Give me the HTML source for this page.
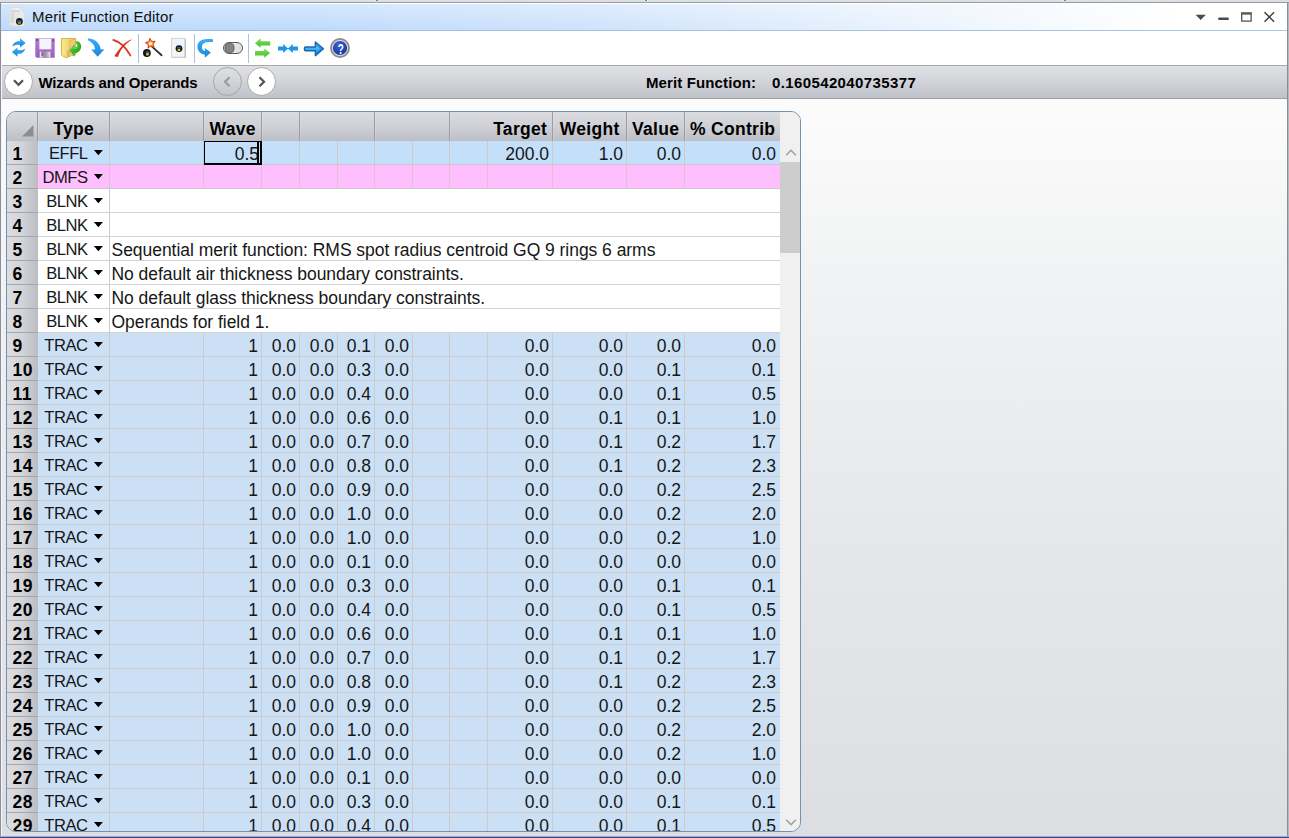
<!DOCTYPE html>
<html><head><meta charset="utf-8"><title>Merit Function Editor</title>
<style>
html,body{margin:0;padding:0}
body{width:1289px;height:838px;overflow:hidden;position:relative;background:#dcdfe3;font-family:"Liberation Sans",sans-serif;color:#000}
div,b,i,span{box-sizing:border-box}
.abs{position:absolute}
#topline{left:0;top:2px;width:1289px;height:1px;background:#979ba2}
#leftedge{left:0;top:3px;width:1px;height:835px;background:#8a8e96}
#leftwhite{left:1px;top:31px;width:1px;height:805px;background:#f4f5f7}
#rightedge{left:1287px;top:3px;width:2px;height:835px;background:linear-gradient(to right,#8a8e96 50%,#b4b7bd 50%)}
#win{left:1px;top:3px;width:1286px;height:833px;overflow:hidden}
#titlew{left:0;top:0;width:1286px;height:1px;background:#fff}
#title{left:0;top:1px;width:1286px;height:26px;background:linear-gradient(to right,#bedafc 0px,#bfdbfc 300px,#cfe3fc 600px,#e2eefd 820px,#f3f8fe 1020px,#ffffff 1180px)}
#title:after{content:"";position:absolute;left:0;top:0;width:100%;height:100%;background:linear-gradient(to bottom,rgba(255,255,255,.36),rgba(255,255,255,0) 95%)}
#titleline{left:0;top:27px;width:1286px;height:1px;background:linear-gradient(to right,#9fbbd9,#a9c3e3 1100px)}
#ttext{left:31px;top:4.5px;font-size:15px;line-height:18px;white-space:nowrap;color:#111;letter-spacing:.15px}
#toolbar{left:0;top:28px;width:1286px;height:34px;background:#fff}
.sep{position:absolute;top:3px;width:1px;height:29px;background:#9db7dd}
.ic{position:absolute;top:6px;width:22px;height:22px}
#hbar{left:0;top:62px;width:1286px;height:34px;background:linear-gradient(to bottom,#dfe1e5 0%,#d3d5da 45%,#bfc2c9 100%);border-top:1px solid #a6a8ad;border-bottom:1px solid #9b9ea5}
.circ{position:absolute;top:1px;width:29px;height:29px;border-radius:50%;border:1px solid #a9a9a9;background:#fff}
.circ svg{position:absolute;left:0;top:0}
#wtext{left:37.5px;top:8px;font-weight:bold;font-size:15px;line-height:18px;white-space:nowrap;letter-spacing:-.18px}
#mf1{left:645px;top:8px;font-weight:bold;font-size:15px;line-height:18px;white-space:nowrap;letter-spacing:.12px}
#mf2{left:771px;top:8px;font-weight:bold;font-size:15px;line-height:18px;white-space:nowrap;letter-spacing:.38px}
#content{left:0;top:96px;width:1286px;height:737px;background:linear-gradient(to bottom,#fcfcfc 0%,#f1f2f3 25%,#e6e7ea 60%,#dcdee2 100%)}
#botgray{left:0;top:836px;width:1289px;height:1px;background:#a9abb0}
#botblue{left:0;top:837px;width:1289px;height:1px;background:#2b4a9c}
/* grid frame */
#frame{left:6px;top:111px;width:795px;height:721px;border:1px solid #7391b4;border-radius:10px;overflow:hidden;background:#f0f0f0}
#grid{position:absolute;left:0;top:0;width:793px;height:719px}
#hdr{position:absolute;left:0;top:0;width:773px;height:29px;background:linear-gradient(to bottom,#dadce0 0%,#cfd1d6 50%,#bcbec5 100%)}
#hdrline{display:none}
.hv{position:absolute;top:0;width:1px;height:29px;background:#9c9ea4;box-shadow:1px 0 0 rgba(255,255,255,.12)}
.hc{position:absolute;top:0;height:28px;line-height:34px;text-align:center;font-weight:bold;font-size:17.5px;white-space:nowrap;letter-spacing:.3px;text-indent:.3px}
.r{position:absolute;left:0;width:773px;height:24px;border-bottom:1px solid #cbcbcb;color:#161616;font-size:17.5px;line-height:26px;white-space:nowrap}
.r.sel{background:#c4dff9}
.r.pink{background:#ffbfff}
.r.blank{background:#fff;border-bottom-color:#d3d3d3}
.r.trac{background:#cbe0f4}
.rn{position:absolute;left:0;top:0;width:31px;height:24px;color:#000;background:linear-gradient(to right,#dddee1 0%,#d2d3d7 50%,#bcbdc3 100%);font-weight:bold;padding-left:5.5px;letter-spacing:.5px;border-bottom:1px solid #a4a6ab}
.ty{position:absolute;left:31px;top:0;width:71px;height:23px}
.ty span{position:absolute;right:21.5px;top:0;letter-spacing:-.5px;font-size:16.6px}
.ty i{position:absolute;left:55.9px;top:9px;width:9px;height:5.3px;background:#000;clip-path:polygon(0 0,100% 0,50% 100%)}
.r:after{content:"";position:absolute;left:102px;top:0;width:1px;height:23px;background:#cbcbcb}
.vl{position:absolute;top:0;width:1px;height:23px;background:#cbcbcb}
.pink .vl,.pink:after{background:#d9c2d9}
.c{position:absolute;top:0;height:23px;text-align:right;padding-right:3px}
.c.ed{z-index:2;border:solid #000;border-width:1px 2px 2px 1px;height:24px;padding-right:1px;line-height:24px}
.c.ed:after{content:"";position:absolute;right:1px;top:0;width:2px;height:21px;background:#000}
.cm{position:absolute;left:103px;top:0;padding-left:1.5px;letter-spacing:-.04px}
/* scrollbar */
#sb{position:absolute;left:773px;top:0;width:20px;height:719px;background:#f0f0f0}
#thumb{position:absolute;left:0;top:50px;width:20px;height:91px;background:#cdcdcd}
</style></head><body>
<div class="abs" id="topline"></div>
<b class="abs" style="left:375px;top:0;width:4px;height:1px;background:#f4f4f4"></b><b class="abs" style="left:376px;top:0;width:2px;height:1px;background:#7a7e86"></b>
<b class="abs" style="left:644px;top:0;width:4px;height:1px;background:#f4f4f4"></b><b class="abs" style="left:645px;top:0;width:2px;height:1px;background:#7a7e86"></b>
<b class="abs" style="left:1063px;top:0;width:4px;height:1px;background:#f4f4f4"></b><b class="abs" style="left:1064px;top:0;width:2px;height:1px;background:#7a7e86"></b>
<div class="abs" id="win">
 <div class="abs" id="titlew"></div>
 <div class="abs" id="title"></div>
 <div class="abs" id="titleline"></div>
 <!-- title icon -->
 <svg class="abs" style="left:7px;top:3px" width="18" height="22" viewBox="0 0 18 22">
  <defs><linearGradient id="docg" x1="0" y1="0" x2="1" y2="0"><stop offset="0" stop-color="#e2e2e2"/><stop offset=".5" stop-color="#f1f1f1"/><stop offset="1" stop-color="#e6e6e6"/></linearGradient></defs>
  <path d="M1.5 1.5h10.3l4.7 4.9v13.6h-15z" fill="url(#docg)" stroke="#dcdcdc" stroke-width="1"/>
  <path d="M3.2 3.9h8l.6 .6v12.6h-8.6z" fill="#d6d6d6"/>
  <path d="M5.8 6h6v11h-6z" fill="#e7e7e7"/>
  <circle cx="11.4" cy="15.4" r="3.4" fill="#1a1a1a"/><path d="M9.6 16.1h3.6l-.5 1.9h-2.6z" fill="#8f8c22"/><path d="M9.4 14.6h4.1v1.2h-4.1z" fill="#2a78b8"/>
 </svg>
 <div class="abs" id="ttext">Merit Function Editor</div>
 <!-- window controls -->
 <svg class="abs" style="left:1189px;top:5px" width="92" height="18" viewBox="0 0 92 18">
  <path d="M5.6 6.7h10.2l-5.1 5.4z" fill="#4a4a4a"/>
  <rect x="28.3" y="9.6" width="10.4" height="2.5" rx=".6" fill="#4a4a4a"/>
  <rect x="51.7" y="5.2" width="9.4" height="7.9" fill="none" stroke="#555" stroke-width="1.3"/><rect x="51.1" y="4.4" width="10.6" height="2.2" fill="#555"/>
  <path d="M74.5 4.3l9.6 9.4M84.1 4.3l-9.6 9.4" stroke="#444" stroke-width="1.5" fill="none"/>
 </svg>
 <div class="abs" id="toolbar">
  <svg style="position:absolute;left:0;top:0" width="400" height="34" viewBox="1 31 400 34">
 <defs>
  <linearGradient id="gb" x1="0" y1="0" x2="0" y2="1"><stop offset="0" stop-color="#38b0f8"/><stop offset="1" stop-color="#1886de"/></linearGradient>
  <linearGradient id="gp" x1="0" y1="0" x2="0" y2="1"><stop offset="0" stop-color="#b07ad0"/><stop offset="1" stop-color="#9a5fc0"/></linearGradient>
  <linearGradient id="gy" x1="0" y1="0" x2="1" y2="0"><stop offset="0" stop-color="#f8ea8a"/><stop offset="1" stop-color="#ecc860"/></linearGradient>
  <linearGradient id="gg" x1="0" y1="0" x2="1" y2="1"><stop offset="0" stop-color="#5fd048"/><stop offset="1" stop-color="#1f9a14"/></linearGradient>
  <linearGradient id="gg2" x1="0" y1="0" x2="0" y2="1"><stop offset="0" stop-color="#7fe058"/><stop offset="1" stop-color="#46bf2a"/></linearGradient>
  <linearGradient id="gs" x1="0" y1="0" x2="1" y2="0"><stop offset="0" stop-color="#f4f4f4"/><stop offset=".5" stop-color="#8f8f8f"/><stop offset="1" stop-color="#e8e8e8"/></linearGradient>
  <linearGradient id="ga" x1="0" y1="0" x2="0" y2="1"><stop offset="0" stop-color="#8fd8fb"/><stop offset=".5" stop-color="#3fb2f2"/><stop offset="1" stop-color="#2a8fe0"/></linearGradient>
  <radialGradient id="gh" cx=".4" cy=".3" r=".8"><stop offset="0" stop-color="#3a62d8"/><stop offset="1" stop-color="#12309a"/></radialGradient>
 </defs>
 <!-- 1 refresh -->
 <g fill="url(#gb)">
  <path d="M12.3 46.6C13 42.6 16.6 40.8 20 41.2L20 38.2 25.6 43 20 47.6 20 44.9C17.4 44.5 14.4 45 12.3 46.6Z"/>
  <path d="M25.2 48.4C24.5 52.4 20.9 54.2 17.5 53.8L17.5 56.8 11.9 52 17.5 47.4 17.5 50.1C20.1 50.5 23.1 50 25.2 48.4Z"/>
 </g>
 <!-- 2 floppy -->
 <path d="M35.3 38.3h19.4v19.4h-18l-1.4-1.4z" fill="url(#gp)"/>
 <rect x="39.2" y="38.6" width="12" height="10.6" fill="#f2f6fb" stroke="#c9b3dc" stroke-width=".6"/>
 <rect x="36.2" y="39.2" width="1.6" height="1.6" fill="#5a3a70"/><rect x="52.6" y="39.2" width="1.2" height="2.4" fill="#5a3a70"/>
 <rect x="39.8" y="51.6" width="10.6" height="6" fill="url(#gs)"/>
 <rect x="41.3" y="52" width="2.4" height="4.2" fill="#9a5fc0"/>
 <!-- 3 folder + green arrow -->
 <path d="M61.5 38.5h14.2v16.3l-4 .4-5 2.5-1.6-.3-3.6-2.2z" fill="url(#gy)" stroke="#d9ab42" stroke-width=".9"/>
 <path d="M69.3 40.4l6.2-1.2v15.6l-6.2 1.6z" fill="#f5c877" stroke="#dca94a" stroke-width=".5"/>
 <path d="M66.7 50.5l2.6 0v6l-2.6 1.1z" fill="#c9a25a" opacity=".55"/>
 <path d="M69.2 50.2L74.6 44 74.6 47.4C77 47.4 77.7 46 77.3 44.7 77.1 43.9 76.5 43.6 75.8 43.8L75.5 41.3C78.8 40.5 80.8 42.6 81.1 45.6 81.5 49.8 79 53 74.6 53.2L74.6 56.7Z" fill="url(#gg)"/>
 <path d="M70.6 50.2L74 46.4 74 48.4C76 48.6 77.4 48 78 46.8" fill="none" stroke="#7df060" stroke-width=".9" opacity=".8"/>
 <!-- 4 blue curved arrow -->
 <path d="M88 38.6C91 38.4 95 39.6 97.6 42.4 99.6 44.6 100.5 47 100.7 49.4L104.5 49.3 97.6 56.8 91.3 49.6 95 49.6C95 46.6 93.4 43 88 40.3Z" fill="url(#gb)"/>
 <!-- 5 red X -->
 <path d="M113.4 40C117 41 120.5 43.2 122.8 45.4 125.5 48 128.5 52 130.4 55.4" fill="none" stroke="#e03a2a" stroke-width="1.9" stroke-linecap="round"/>
 <path d="M132.4 39.3C128 40.5 124.5 42.9 121.9 45.9 118.9 49.4 116.3 52.8 114.2 56.2L117.9 57C119.1 53 121 49.6 123.6 46.7 126 44 129 41.5 132.4 39.3Z" fill="#df2e1e"/>
 <!-- 6 wand -->
 <path d="M152 46.6L161.6 55.2" stroke="#333" stroke-width="1.9" stroke-linecap="round"/>
 <path d="M149.8 38.5 L151.6 41.5 L155.0 41.3 L152.8 43.9 L154.0 47.1 L150.8 45.8 L148.2 47.9 L148.4 44.5 L145.6 42.6 L148.9 41.8Z" fill="#fbe23a" stroke="#e2452c" stroke-width="1.2" stroke-linejoin="round"/><circle cx="150.3" cy="43.6" r="1.6" fill="#fff9b0"/>
 <circle cx="146.9" cy="53" r="3.9" fill="#141414"/><rect x="146.2" y="53" width="2.6" height="2.4" fill="#d8c62a"/><rect x="145.6" y="51.4" width="4" height="1.2" fill="#2a6fb5"/>
 <!-- 7 doc -->
 <rect x="172.4" y="39" width="13.6" height="19" fill="#bdbdbd"/><rect x="171.6" y="38.4" width="13.2" height="18.8" fill="#f1f4f9" stroke="#d2d2d2" stroke-width="1"/>
 <circle cx="179" cy="48.6" r="3.4" fill="#141414"/><rect x="177.6" y="48.8" width="2.6" height="2.2" fill="#d8c62a"/><rect x="177" y="47.2" width="4" height="1.1" fill="#2a6fb5"/>
 <!-- 8 undo -->
 <path d="M213 39.2L213 42.1C209 41.8 206 42 204.2 43 202.2 44.2 201.4 46.4 202.2 48.6 202.7 49.9 203.7 50.8 204.8 51.2L204.8 48 210.9 52.5 204.8 57.7 204.8 54.8C200.5 54.2 197.4 50.8 197.4 46.6 197.4 42.4 200.4 39.6 205 39.2 207.6 39 210.4 39 213 39.2Z" fill="url(#gb)"/>
 <!-- 9 toggle -->
 <rect x="223.5" y="42.5" width="19" height="11" rx="5.5" fill="#e2e2e2" stroke="#5a5a5a" stroke-width="1"/>
 <rect x="225" y="43.4" width="9" height="9.2" rx="3.6" fill="#838383" stroke="#5e5e5e" stroke-width=".9"/>
 <!-- 10 green arrows -->
 <path d="M270.2 41.2v4.2h-9.6v2.4l-5.6-4.6 5.6-5v3z" fill="url(#gg2)"/>
 <path d="M255 51v4.4h9.2v2.4l6-4.8-6-4.6v2.6z" fill="url(#gg2)"/>
 <!-- 11 blue inward arrows -->
 <path d="M278 46.6h5.2v-2.6l4.8 4.5-4.8 4.5v-2.6h-5.2z" fill="#2096ea"/>
 <path d="M298 46.6h-5.2v-2.6l-4.8 4.5 4.8 4.5v-2.6h5.2z" fill="#2096ea"/>
 <path d="M287 48.5h2" stroke="#2096ea" stroke-width="1.2"/>
 <!-- 12 blue right arrow -->
 <path d="M305.7 46.9h9.7v-4.9l8 6.7-8 6.9v-4.9h-9.7a1.2 1.2 0 0 1-1.2-1.2v-1.4a1.2 1.2 0 0 1 1.2-1.2z" fill="url(#ga)" stroke="#1766b6" stroke-width="1.5" stroke-linejoin="round"/>
 <path d="M316.3 44.6l5 4.2-5 4.3" fill="none" stroke="#1d78c8" stroke-width="1.1" opacity=".75"/>
 <!-- 13 help -->
 <circle cx="340" cy="48" r="9" fill="#dfe3ea" stroke="#8e8e8e" stroke-width="2"/>
 <circle cx="340" cy="48" r="7.1" fill="url(#gh)"/>
 <text transform="translate(340.7,53.6) scale(.66,1)" text-anchor="middle" font-family="Liberation Sans, sans-serif" font-weight="bold" font-size="15" fill="#fff">?</text>
 <!-- separators -->
 <rect x="138" y="34" width="1" height="29" fill="#a9c1e2"/>
 <rect x="194" y="34" width="1" height="29" fill="#a9c1e2"/>
 <rect x="248" y="34" width="1" height="29" fill="#a9c1e2"/>
</svg>

 </div>
 <div class="abs" id="hbar">
  <div class="circ" style="left:2.5px"><svg width="27" height="27" viewBox="0 0 27 27"><path d="M9 12.3l4.5 4.5L18 12.3" fill="none" stroke="#555" stroke-width="2.3"/></svg></div>
  <div class="abs" id="wtext">Wizards and Operands</div>
  <div class="circ" style="left:212px;background:transparent;border-color:#a4a6aa"><svg width="27" height="27" viewBox="0 0 27 27"><path d="M15.5 9.3l-4.5 4.5 4.5 4.5" fill="none" stroke="#9c9c9c" stroke-width="2.3"/></svg></div>
  <div class="circ" style="left:246px"><svg width="27" height="27" viewBox="0 0 27 27"><path d="M11.5 9.3l4.5 4.5-4.5 4.5" fill="none" stroke="#555" stroke-width="2.3"/></svg></div>
  <div class="abs" id="mf1">Merit Function:</div>
  <div class="abs" id="mf2">0.160542040735377</div>
 </div>
 <div class="abs" id="content"></div>
</div>
<div class="abs" id="leftedge"></div><div class="abs" id="leftwhite"></div><div class="abs" id="rightedge"></div>
<div class="abs" id="botgray"></div><div class="abs" id="botblue"></div>
<div class="abs" id="frame"><div id="grid">
 <div id="hdr">
  <svg style="position:absolute;left:14px;top:12px" width="14" height="14" viewBox="0 0 14 14"><path d="M12.5 1v11.5H1z" fill="#8e8e8e"/></svg>
  <div class="hc" style="left:31px;width:71px">Type</div><div class="hc" style="left:197px;width:57px">Wave</div><div class="hc" style="left:481px;width:64px">Target</div><div class="hc" style="left:546px;width:73px">Weight</div><div class="hc" style="left:620px;width:57px">Value</div><div class="hc" style="left:678px;width:95px">% Contrib</div><b class="hv" style="left:30px"></b><b class="hv" style="left:102px"></b><b class="hv" style="left:196px"></b><b class="hv" style="left:254px"></b><b class="hv" style="left:292px"></b><b class="hv" style="left:367px"></b><b class="hv" style="left:442px"></b><b class="hv" style="left:545px"></b><b class="hv" style="left:619px"></b><b class="hv" style="left:677px"></b>
 </div>
 <div id="hdrline"></div>
 <div class="r sel" style="top:29px">
<div class="rn">1</div>
<div class="ty"><span>EFFL</span><i></i></div>
<div class="c" style="left:103px;width:93px"></div>
<div class="c ed" style="left:197px;width:58px">0.5</div>
<div class="c" style="left:255px;width:37px"></div>
<div class="c" style="left:293px;width:37px"></div>
<div class="c" style="left:331px;width:36px"></div>
<div class="c" style="left:368px;width:37px"></div>
<div class="c" style="left:406px;width:36px"></div>
<div class="c" style="left:443px;width:37px"></div>
<div class="c" style="left:481px;width:64px">200.0</div>
<div class="c" style="left:546px;width:73px">1.0</div>
<div class="c" style="left:620px;width:57px">0.0</div>
<div class="c" style="left:678px;width:94px">0.0</div>
<b class="vl" style="left:196px"></b>
<b class="vl" style="left:254px"></b>
<b class="vl" style="left:292px"></b>
<b class="vl" style="left:330px"></b>
<b class="vl" style="left:367px"></b>
<b class="vl" style="left:405px"></b>
<b class="vl" style="left:442px"></b>
<b class="vl" style="left:480px"></b>
<b class="vl" style="left:545px"></b>
<b class="vl" style="left:619px"></b>
<b class="vl" style="left:677px"></b>
</div>
<div class="r pink" style="top:53px">
<div class="rn">2</div>
<div class="ty"><span>DMFS</span><i></i></div>
<div class="c" style="left:103px;width:93px"></div>
<div class="c" style="left:197px;width:57px"></div>
<div class="c" style="left:255px;width:37px"></div>
<div class="c" style="left:293px;width:37px"></div>
<div class="c" style="left:331px;width:36px"></div>
<div class="c" style="left:368px;width:37px"></div>
<div class="c" style="left:406px;width:36px"></div>
<div class="c" style="left:443px;width:37px"></div>
<div class="c" style="left:481px;width:64px"></div>
<div class="c" style="left:546px;width:73px"></div>
<div class="c" style="left:620px;width:57px"></div>
<div class="c" style="left:678px;width:94px"></div>
<b class="vl" style="left:196px"></b>
<b class="vl" style="left:254px"></b>
<b class="vl" style="left:292px"></b>
<b class="vl" style="left:330px"></b>
<b class="vl" style="left:367px"></b>
<b class="vl" style="left:405px"></b>
<b class="vl" style="left:442px"></b>
<b class="vl" style="left:480px"></b>
<b class="vl" style="left:545px"></b>
<b class="vl" style="left:619px"></b>
<b class="vl" style="left:677px"></b>
</div>
<div class="r blank" style="top:77px">
<div class="rn">3</div>
<div class="ty"><span>BLNK</span><i></i></div>
<div class="cm"></div>
</div>
<div class="r blank" style="top:101px">
<div class="rn">4</div>
<div class="ty"><span>BLNK</span><i></i></div>
<div class="cm"></div>
</div>
<div class="r blank" style="top:125px">
<div class="rn">5</div>
<div class="ty"><span>BLNK</span><i></i></div>
<div class="cm">Sequential merit function: RMS spot radius centroid GQ 9 rings 6 arms</div>
</div>
<div class="r blank" style="top:149px">
<div class="rn">6</div>
<div class="ty"><span>BLNK</span><i></i></div>
<div class="cm">No default air thickness boundary constraints.</div>
</div>
<div class="r blank" style="top:173px">
<div class="rn">7</div>
<div class="ty"><span>BLNK</span><i></i></div>
<div class="cm">No default glass thickness boundary constraints.</div>
</div>
<div class="r blank" style="top:197px">
<div class="rn">8</div>
<div class="ty"><span>BLNK</span><i></i></div>
<div class="cm">Operands for field 1.</div>
</div>
<div class="r trac" style="top:221px">
<div class="rn">9</div>
<div class="ty"><span>TRAC</span><i></i></div>
<div class="c" style="left:103px;width:93px"></div>
<div class="c" style="left:197px;width:57px">1</div>
<div class="c" style="left:255px;width:37px">0.0</div>
<div class="c" style="left:293px;width:37px">0.0</div>
<div class="c" style="left:331px;width:36px">0.1</div>
<div class="c" style="left:368px;width:37px">0.0</div>
<div class="c" style="left:406px;width:36px"></div>
<div class="c" style="left:443px;width:37px"></div>
<div class="c" style="left:481px;width:64px">0.0</div>
<div class="c" style="left:546px;width:73px">0.0</div>
<div class="c" style="left:620px;width:57px">0.0</div>
<div class="c" style="left:678px;width:94px">0.0</div>
<b class="vl" style="left:196px"></b>
<b class="vl" style="left:254px"></b>
<b class="vl" style="left:292px"></b>
<b class="vl" style="left:330px"></b>
<b class="vl" style="left:367px"></b>
<b class="vl" style="left:405px"></b>
<b class="vl" style="left:442px"></b>
<b class="vl" style="left:480px"></b>
<b class="vl" style="left:545px"></b>
<b class="vl" style="left:619px"></b>
<b class="vl" style="left:677px"></b>
</div>
<div class="r trac" style="top:245px">
<div class="rn">10</div>
<div class="ty"><span>TRAC</span><i></i></div>
<div class="c" style="left:103px;width:93px"></div>
<div class="c" style="left:197px;width:57px">1</div>
<div class="c" style="left:255px;width:37px">0.0</div>
<div class="c" style="left:293px;width:37px">0.0</div>
<div class="c" style="left:331px;width:36px">0.3</div>
<div class="c" style="left:368px;width:37px">0.0</div>
<div class="c" style="left:406px;width:36px"></div>
<div class="c" style="left:443px;width:37px"></div>
<div class="c" style="left:481px;width:64px">0.0</div>
<div class="c" style="left:546px;width:73px">0.0</div>
<div class="c" style="left:620px;width:57px">0.1</div>
<div class="c" style="left:678px;width:94px">0.1</div>
<b class="vl" style="left:196px"></b>
<b class="vl" style="left:254px"></b>
<b class="vl" style="left:292px"></b>
<b class="vl" style="left:330px"></b>
<b class="vl" style="left:367px"></b>
<b class="vl" style="left:405px"></b>
<b class="vl" style="left:442px"></b>
<b class="vl" style="left:480px"></b>
<b class="vl" style="left:545px"></b>
<b class="vl" style="left:619px"></b>
<b class="vl" style="left:677px"></b>
</div>
<div class="r trac" style="top:269px">
<div class="rn">11</div>
<div class="ty"><span>TRAC</span><i></i></div>
<div class="c" style="left:103px;width:93px"></div>
<div class="c" style="left:197px;width:57px">1</div>
<div class="c" style="left:255px;width:37px">0.0</div>
<div class="c" style="left:293px;width:37px">0.0</div>
<div class="c" style="left:331px;width:36px">0.4</div>
<div class="c" style="left:368px;width:37px">0.0</div>
<div class="c" style="left:406px;width:36px"></div>
<div class="c" style="left:443px;width:37px"></div>
<div class="c" style="left:481px;width:64px">0.0</div>
<div class="c" style="left:546px;width:73px">0.0</div>
<div class="c" style="left:620px;width:57px">0.1</div>
<div class="c" style="left:678px;width:94px">0.5</div>
<b class="vl" style="left:196px"></b>
<b class="vl" style="left:254px"></b>
<b class="vl" style="left:292px"></b>
<b class="vl" style="left:330px"></b>
<b class="vl" style="left:367px"></b>
<b class="vl" style="left:405px"></b>
<b class="vl" style="left:442px"></b>
<b class="vl" style="left:480px"></b>
<b class="vl" style="left:545px"></b>
<b class="vl" style="left:619px"></b>
<b class="vl" style="left:677px"></b>
</div>
<div class="r trac" style="top:293px">
<div class="rn">12</div>
<div class="ty"><span>TRAC</span><i></i></div>
<div class="c" style="left:103px;width:93px"></div>
<div class="c" style="left:197px;width:57px">1</div>
<div class="c" style="left:255px;width:37px">0.0</div>
<div class="c" style="left:293px;width:37px">0.0</div>
<div class="c" style="left:331px;width:36px">0.6</div>
<div class="c" style="left:368px;width:37px">0.0</div>
<div class="c" style="left:406px;width:36px"></div>
<div class="c" style="left:443px;width:37px"></div>
<div class="c" style="left:481px;width:64px">0.0</div>
<div class="c" style="left:546px;width:73px">0.1</div>
<div class="c" style="left:620px;width:57px">0.1</div>
<div class="c" style="left:678px;width:94px">1.0</div>
<b class="vl" style="left:196px"></b>
<b class="vl" style="left:254px"></b>
<b class="vl" style="left:292px"></b>
<b class="vl" style="left:330px"></b>
<b class="vl" style="left:367px"></b>
<b class="vl" style="left:405px"></b>
<b class="vl" style="left:442px"></b>
<b class="vl" style="left:480px"></b>
<b class="vl" style="left:545px"></b>
<b class="vl" style="left:619px"></b>
<b class="vl" style="left:677px"></b>
</div>
<div class="r trac" style="top:317px">
<div class="rn">13</div>
<div class="ty"><span>TRAC</span><i></i></div>
<div class="c" style="left:103px;width:93px"></div>
<div class="c" style="left:197px;width:57px">1</div>
<div class="c" style="left:255px;width:37px">0.0</div>
<div class="c" style="left:293px;width:37px">0.0</div>
<div class="c" style="left:331px;width:36px">0.7</div>
<div class="c" style="left:368px;width:37px">0.0</div>
<div class="c" style="left:406px;width:36px"></div>
<div class="c" style="left:443px;width:37px"></div>
<div class="c" style="left:481px;width:64px">0.0</div>
<div class="c" style="left:546px;width:73px">0.1</div>
<div class="c" style="left:620px;width:57px">0.2</div>
<div class="c" style="left:678px;width:94px">1.7</div>
<b class="vl" style="left:196px"></b>
<b class="vl" style="left:254px"></b>
<b class="vl" style="left:292px"></b>
<b class="vl" style="left:330px"></b>
<b class="vl" style="left:367px"></b>
<b class="vl" style="left:405px"></b>
<b class="vl" style="left:442px"></b>
<b class="vl" style="left:480px"></b>
<b class="vl" style="left:545px"></b>
<b class="vl" style="left:619px"></b>
<b class="vl" style="left:677px"></b>
</div>
<div class="r trac" style="top:341px">
<div class="rn">14</div>
<div class="ty"><span>TRAC</span><i></i></div>
<div class="c" style="left:103px;width:93px"></div>
<div class="c" style="left:197px;width:57px">1</div>
<div class="c" style="left:255px;width:37px">0.0</div>
<div class="c" style="left:293px;width:37px">0.0</div>
<div class="c" style="left:331px;width:36px">0.8</div>
<div class="c" style="left:368px;width:37px">0.0</div>
<div class="c" style="left:406px;width:36px"></div>
<div class="c" style="left:443px;width:37px"></div>
<div class="c" style="left:481px;width:64px">0.0</div>
<div class="c" style="left:546px;width:73px">0.1</div>
<div class="c" style="left:620px;width:57px">0.2</div>
<div class="c" style="left:678px;width:94px">2.3</div>
<b class="vl" style="left:196px"></b>
<b class="vl" style="left:254px"></b>
<b class="vl" style="left:292px"></b>
<b class="vl" style="left:330px"></b>
<b class="vl" style="left:367px"></b>
<b class="vl" style="left:405px"></b>
<b class="vl" style="left:442px"></b>
<b class="vl" style="left:480px"></b>
<b class="vl" style="left:545px"></b>
<b class="vl" style="left:619px"></b>
<b class="vl" style="left:677px"></b>
</div>
<div class="r trac" style="top:365px">
<div class="rn">15</div>
<div class="ty"><span>TRAC</span><i></i></div>
<div class="c" style="left:103px;width:93px"></div>
<div class="c" style="left:197px;width:57px">1</div>
<div class="c" style="left:255px;width:37px">0.0</div>
<div class="c" style="left:293px;width:37px">0.0</div>
<div class="c" style="left:331px;width:36px">0.9</div>
<div class="c" style="left:368px;width:37px">0.0</div>
<div class="c" style="left:406px;width:36px"></div>
<div class="c" style="left:443px;width:37px"></div>
<div class="c" style="left:481px;width:64px">0.0</div>
<div class="c" style="left:546px;width:73px">0.0</div>
<div class="c" style="left:620px;width:57px">0.2</div>
<div class="c" style="left:678px;width:94px">2.5</div>
<b class="vl" style="left:196px"></b>
<b class="vl" style="left:254px"></b>
<b class="vl" style="left:292px"></b>
<b class="vl" style="left:330px"></b>
<b class="vl" style="left:367px"></b>
<b class="vl" style="left:405px"></b>
<b class="vl" style="left:442px"></b>
<b class="vl" style="left:480px"></b>
<b class="vl" style="left:545px"></b>
<b class="vl" style="left:619px"></b>
<b class="vl" style="left:677px"></b>
</div>
<div class="r trac" style="top:389px">
<div class="rn">16</div>
<div class="ty"><span>TRAC</span><i></i></div>
<div class="c" style="left:103px;width:93px"></div>
<div class="c" style="left:197px;width:57px">1</div>
<div class="c" style="left:255px;width:37px">0.0</div>
<div class="c" style="left:293px;width:37px">0.0</div>
<div class="c" style="left:331px;width:36px">1.0</div>
<div class="c" style="left:368px;width:37px">0.0</div>
<div class="c" style="left:406px;width:36px"></div>
<div class="c" style="left:443px;width:37px"></div>
<div class="c" style="left:481px;width:64px">0.0</div>
<div class="c" style="left:546px;width:73px">0.0</div>
<div class="c" style="left:620px;width:57px">0.2</div>
<div class="c" style="left:678px;width:94px">2.0</div>
<b class="vl" style="left:196px"></b>
<b class="vl" style="left:254px"></b>
<b class="vl" style="left:292px"></b>
<b class="vl" style="left:330px"></b>
<b class="vl" style="left:367px"></b>
<b class="vl" style="left:405px"></b>
<b class="vl" style="left:442px"></b>
<b class="vl" style="left:480px"></b>
<b class="vl" style="left:545px"></b>
<b class="vl" style="left:619px"></b>
<b class="vl" style="left:677px"></b>
</div>
<div class="r trac" style="top:413px">
<div class="rn">17</div>
<div class="ty"><span>TRAC</span><i></i></div>
<div class="c" style="left:103px;width:93px"></div>
<div class="c" style="left:197px;width:57px">1</div>
<div class="c" style="left:255px;width:37px">0.0</div>
<div class="c" style="left:293px;width:37px">0.0</div>
<div class="c" style="left:331px;width:36px">1.0</div>
<div class="c" style="left:368px;width:37px">0.0</div>
<div class="c" style="left:406px;width:36px"></div>
<div class="c" style="left:443px;width:37px"></div>
<div class="c" style="left:481px;width:64px">0.0</div>
<div class="c" style="left:546px;width:73px">0.0</div>
<div class="c" style="left:620px;width:57px">0.2</div>
<div class="c" style="left:678px;width:94px">1.0</div>
<b class="vl" style="left:196px"></b>
<b class="vl" style="left:254px"></b>
<b class="vl" style="left:292px"></b>
<b class="vl" style="left:330px"></b>
<b class="vl" style="left:367px"></b>
<b class="vl" style="left:405px"></b>
<b class="vl" style="left:442px"></b>
<b class="vl" style="left:480px"></b>
<b class="vl" style="left:545px"></b>
<b class="vl" style="left:619px"></b>
<b class="vl" style="left:677px"></b>
</div>
<div class="r trac" style="top:437px">
<div class="rn">18</div>
<div class="ty"><span>TRAC</span><i></i></div>
<div class="c" style="left:103px;width:93px"></div>
<div class="c" style="left:197px;width:57px">1</div>
<div class="c" style="left:255px;width:37px">0.0</div>
<div class="c" style="left:293px;width:37px">0.0</div>
<div class="c" style="left:331px;width:36px">0.1</div>
<div class="c" style="left:368px;width:37px">0.0</div>
<div class="c" style="left:406px;width:36px"></div>
<div class="c" style="left:443px;width:37px"></div>
<div class="c" style="left:481px;width:64px">0.0</div>
<div class="c" style="left:546px;width:73px">0.0</div>
<div class="c" style="left:620px;width:57px">0.0</div>
<div class="c" style="left:678px;width:94px">0.0</div>
<b class="vl" style="left:196px"></b>
<b class="vl" style="left:254px"></b>
<b class="vl" style="left:292px"></b>
<b class="vl" style="left:330px"></b>
<b class="vl" style="left:367px"></b>
<b class="vl" style="left:405px"></b>
<b class="vl" style="left:442px"></b>
<b class="vl" style="left:480px"></b>
<b class="vl" style="left:545px"></b>
<b class="vl" style="left:619px"></b>
<b class="vl" style="left:677px"></b>
</div>
<div class="r trac" style="top:461px">
<div class="rn">19</div>
<div class="ty"><span>TRAC</span><i></i></div>
<div class="c" style="left:103px;width:93px"></div>
<div class="c" style="left:197px;width:57px">1</div>
<div class="c" style="left:255px;width:37px">0.0</div>
<div class="c" style="left:293px;width:37px">0.0</div>
<div class="c" style="left:331px;width:36px">0.3</div>
<div class="c" style="left:368px;width:37px">0.0</div>
<div class="c" style="left:406px;width:36px"></div>
<div class="c" style="left:443px;width:37px"></div>
<div class="c" style="left:481px;width:64px">0.0</div>
<div class="c" style="left:546px;width:73px">0.0</div>
<div class="c" style="left:620px;width:57px">0.1</div>
<div class="c" style="left:678px;width:94px">0.1</div>
<b class="vl" style="left:196px"></b>
<b class="vl" style="left:254px"></b>
<b class="vl" style="left:292px"></b>
<b class="vl" style="left:330px"></b>
<b class="vl" style="left:367px"></b>
<b class="vl" style="left:405px"></b>
<b class="vl" style="left:442px"></b>
<b class="vl" style="left:480px"></b>
<b class="vl" style="left:545px"></b>
<b class="vl" style="left:619px"></b>
<b class="vl" style="left:677px"></b>
</div>
<div class="r trac" style="top:485px">
<div class="rn">20</div>
<div class="ty"><span>TRAC</span><i></i></div>
<div class="c" style="left:103px;width:93px"></div>
<div class="c" style="left:197px;width:57px">1</div>
<div class="c" style="left:255px;width:37px">0.0</div>
<div class="c" style="left:293px;width:37px">0.0</div>
<div class="c" style="left:331px;width:36px">0.4</div>
<div class="c" style="left:368px;width:37px">0.0</div>
<div class="c" style="left:406px;width:36px"></div>
<div class="c" style="left:443px;width:37px"></div>
<div class="c" style="left:481px;width:64px">0.0</div>
<div class="c" style="left:546px;width:73px">0.0</div>
<div class="c" style="left:620px;width:57px">0.1</div>
<div class="c" style="left:678px;width:94px">0.5</div>
<b class="vl" style="left:196px"></b>
<b class="vl" style="left:254px"></b>
<b class="vl" style="left:292px"></b>
<b class="vl" style="left:330px"></b>
<b class="vl" style="left:367px"></b>
<b class="vl" style="left:405px"></b>
<b class="vl" style="left:442px"></b>
<b class="vl" style="left:480px"></b>
<b class="vl" style="left:545px"></b>
<b class="vl" style="left:619px"></b>
<b class="vl" style="left:677px"></b>
</div>
<div class="r trac" style="top:509px">
<div class="rn">21</div>
<div class="ty"><span>TRAC</span><i></i></div>
<div class="c" style="left:103px;width:93px"></div>
<div class="c" style="left:197px;width:57px">1</div>
<div class="c" style="left:255px;width:37px">0.0</div>
<div class="c" style="left:293px;width:37px">0.0</div>
<div class="c" style="left:331px;width:36px">0.6</div>
<div class="c" style="left:368px;width:37px">0.0</div>
<div class="c" style="left:406px;width:36px"></div>
<div class="c" style="left:443px;width:37px"></div>
<div class="c" style="left:481px;width:64px">0.0</div>
<div class="c" style="left:546px;width:73px">0.1</div>
<div class="c" style="left:620px;width:57px">0.1</div>
<div class="c" style="left:678px;width:94px">1.0</div>
<b class="vl" style="left:196px"></b>
<b class="vl" style="left:254px"></b>
<b class="vl" style="left:292px"></b>
<b class="vl" style="left:330px"></b>
<b class="vl" style="left:367px"></b>
<b class="vl" style="left:405px"></b>
<b class="vl" style="left:442px"></b>
<b class="vl" style="left:480px"></b>
<b class="vl" style="left:545px"></b>
<b class="vl" style="left:619px"></b>
<b class="vl" style="left:677px"></b>
</div>
<div class="r trac" style="top:533px">
<div class="rn">22</div>
<div class="ty"><span>TRAC</span><i></i></div>
<div class="c" style="left:103px;width:93px"></div>
<div class="c" style="left:197px;width:57px">1</div>
<div class="c" style="left:255px;width:37px">0.0</div>
<div class="c" style="left:293px;width:37px">0.0</div>
<div class="c" style="left:331px;width:36px">0.7</div>
<div class="c" style="left:368px;width:37px">0.0</div>
<div class="c" style="left:406px;width:36px"></div>
<div class="c" style="left:443px;width:37px"></div>
<div class="c" style="left:481px;width:64px">0.0</div>
<div class="c" style="left:546px;width:73px">0.1</div>
<div class="c" style="left:620px;width:57px">0.2</div>
<div class="c" style="left:678px;width:94px">1.7</div>
<b class="vl" style="left:196px"></b>
<b class="vl" style="left:254px"></b>
<b class="vl" style="left:292px"></b>
<b class="vl" style="left:330px"></b>
<b class="vl" style="left:367px"></b>
<b class="vl" style="left:405px"></b>
<b class="vl" style="left:442px"></b>
<b class="vl" style="left:480px"></b>
<b class="vl" style="left:545px"></b>
<b class="vl" style="left:619px"></b>
<b class="vl" style="left:677px"></b>
</div>
<div class="r trac" style="top:557px">
<div class="rn">23</div>
<div class="ty"><span>TRAC</span><i></i></div>
<div class="c" style="left:103px;width:93px"></div>
<div class="c" style="left:197px;width:57px">1</div>
<div class="c" style="left:255px;width:37px">0.0</div>
<div class="c" style="left:293px;width:37px">0.0</div>
<div class="c" style="left:331px;width:36px">0.8</div>
<div class="c" style="left:368px;width:37px">0.0</div>
<div class="c" style="left:406px;width:36px"></div>
<div class="c" style="left:443px;width:37px"></div>
<div class="c" style="left:481px;width:64px">0.0</div>
<div class="c" style="left:546px;width:73px">0.1</div>
<div class="c" style="left:620px;width:57px">0.2</div>
<div class="c" style="left:678px;width:94px">2.3</div>
<b class="vl" style="left:196px"></b>
<b class="vl" style="left:254px"></b>
<b class="vl" style="left:292px"></b>
<b class="vl" style="left:330px"></b>
<b class="vl" style="left:367px"></b>
<b class="vl" style="left:405px"></b>
<b class="vl" style="left:442px"></b>
<b class="vl" style="left:480px"></b>
<b class="vl" style="left:545px"></b>
<b class="vl" style="left:619px"></b>
<b class="vl" style="left:677px"></b>
</div>
<div class="r trac" style="top:581px">
<div class="rn">24</div>
<div class="ty"><span>TRAC</span><i></i></div>
<div class="c" style="left:103px;width:93px"></div>
<div class="c" style="left:197px;width:57px">1</div>
<div class="c" style="left:255px;width:37px">0.0</div>
<div class="c" style="left:293px;width:37px">0.0</div>
<div class="c" style="left:331px;width:36px">0.9</div>
<div class="c" style="left:368px;width:37px">0.0</div>
<div class="c" style="left:406px;width:36px"></div>
<div class="c" style="left:443px;width:37px"></div>
<div class="c" style="left:481px;width:64px">0.0</div>
<div class="c" style="left:546px;width:73px">0.0</div>
<div class="c" style="left:620px;width:57px">0.2</div>
<div class="c" style="left:678px;width:94px">2.5</div>
<b class="vl" style="left:196px"></b>
<b class="vl" style="left:254px"></b>
<b class="vl" style="left:292px"></b>
<b class="vl" style="left:330px"></b>
<b class="vl" style="left:367px"></b>
<b class="vl" style="left:405px"></b>
<b class="vl" style="left:442px"></b>
<b class="vl" style="left:480px"></b>
<b class="vl" style="left:545px"></b>
<b class="vl" style="left:619px"></b>
<b class="vl" style="left:677px"></b>
</div>
<div class="r trac" style="top:605px">
<div class="rn">25</div>
<div class="ty"><span>TRAC</span><i></i></div>
<div class="c" style="left:103px;width:93px"></div>
<div class="c" style="left:197px;width:57px">1</div>
<div class="c" style="left:255px;width:37px">0.0</div>
<div class="c" style="left:293px;width:37px">0.0</div>
<div class="c" style="left:331px;width:36px">1.0</div>
<div class="c" style="left:368px;width:37px">0.0</div>
<div class="c" style="left:406px;width:36px"></div>
<div class="c" style="left:443px;width:37px"></div>
<div class="c" style="left:481px;width:64px">0.0</div>
<div class="c" style="left:546px;width:73px">0.0</div>
<div class="c" style="left:620px;width:57px">0.2</div>
<div class="c" style="left:678px;width:94px">2.0</div>
<b class="vl" style="left:196px"></b>
<b class="vl" style="left:254px"></b>
<b class="vl" style="left:292px"></b>
<b class="vl" style="left:330px"></b>
<b class="vl" style="left:367px"></b>
<b class="vl" style="left:405px"></b>
<b class="vl" style="left:442px"></b>
<b class="vl" style="left:480px"></b>
<b class="vl" style="left:545px"></b>
<b class="vl" style="left:619px"></b>
<b class="vl" style="left:677px"></b>
</div>
<div class="r trac" style="top:629px">
<div class="rn">26</div>
<div class="ty"><span>TRAC</span><i></i></div>
<div class="c" style="left:103px;width:93px"></div>
<div class="c" style="left:197px;width:57px">1</div>
<div class="c" style="left:255px;width:37px">0.0</div>
<div class="c" style="left:293px;width:37px">0.0</div>
<div class="c" style="left:331px;width:36px">1.0</div>
<div class="c" style="left:368px;width:37px">0.0</div>
<div class="c" style="left:406px;width:36px"></div>
<div class="c" style="left:443px;width:37px"></div>
<div class="c" style="left:481px;width:64px">0.0</div>
<div class="c" style="left:546px;width:73px">0.0</div>
<div class="c" style="left:620px;width:57px">0.2</div>
<div class="c" style="left:678px;width:94px">1.0</div>
<b class="vl" style="left:196px"></b>
<b class="vl" style="left:254px"></b>
<b class="vl" style="left:292px"></b>
<b class="vl" style="left:330px"></b>
<b class="vl" style="left:367px"></b>
<b class="vl" style="left:405px"></b>
<b class="vl" style="left:442px"></b>
<b class="vl" style="left:480px"></b>
<b class="vl" style="left:545px"></b>
<b class="vl" style="left:619px"></b>
<b class="vl" style="left:677px"></b>
</div>
<div class="r trac" style="top:653px">
<div class="rn">27</div>
<div class="ty"><span>TRAC</span><i></i></div>
<div class="c" style="left:103px;width:93px"></div>
<div class="c" style="left:197px;width:57px">1</div>
<div class="c" style="left:255px;width:37px">0.0</div>
<div class="c" style="left:293px;width:37px">0.0</div>
<div class="c" style="left:331px;width:36px">0.1</div>
<div class="c" style="left:368px;width:37px">0.0</div>
<div class="c" style="left:406px;width:36px"></div>
<div class="c" style="left:443px;width:37px"></div>
<div class="c" style="left:481px;width:64px">0.0</div>
<div class="c" style="left:546px;width:73px">0.0</div>
<div class="c" style="left:620px;width:57px">0.0</div>
<div class="c" style="left:678px;width:94px">0.0</div>
<b class="vl" style="left:196px"></b>
<b class="vl" style="left:254px"></b>
<b class="vl" style="left:292px"></b>
<b class="vl" style="left:330px"></b>
<b class="vl" style="left:367px"></b>
<b class="vl" style="left:405px"></b>
<b class="vl" style="left:442px"></b>
<b class="vl" style="left:480px"></b>
<b class="vl" style="left:545px"></b>
<b class="vl" style="left:619px"></b>
<b class="vl" style="left:677px"></b>
</div>
<div class="r trac" style="top:677px">
<div class="rn">28</div>
<div class="ty"><span>TRAC</span><i></i></div>
<div class="c" style="left:103px;width:93px"></div>
<div class="c" style="left:197px;width:57px">1</div>
<div class="c" style="left:255px;width:37px">0.0</div>
<div class="c" style="left:293px;width:37px">0.0</div>
<div class="c" style="left:331px;width:36px">0.3</div>
<div class="c" style="left:368px;width:37px">0.0</div>
<div class="c" style="left:406px;width:36px"></div>
<div class="c" style="left:443px;width:37px"></div>
<div class="c" style="left:481px;width:64px">0.0</div>
<div class="c" style="left:546px;width:73px">0.0</div>
<div class="c" style="left:620px;width:57px">0.1</div>
<div class="c" style="left:678px;width:94px">0.1</div>
<b class="vl" style="left:196px"></b>
<b class="vl" style="left:254px"></b>
<b class="vl" style="left:292px"></b>
<b class="vl" style="left:330px"></b>
<b class="vl" style="left:367px"></b>
<b class="vl" style="left:405px"></b>
<b class="vl" style="left:442px"></b>
<b class="vl" style="left:480px"></b>
<b class="vl" style="left:545px"></b>
<b class="vl" style="left:619px"></b>
<b class="vl" style="left:677px"></b>
</div>
<div class="r trac" style="top:701px">
<div class="rn">29</div>
<div class="ty"><span>TRAC</span><i></i></div>
<div class="c" style="left:103px;width:93px"></div>
<div class="c" style="left:197px;width:57px">1</div>
<div class="c" style="left:255px;width:37px">0.0</div>
<div class="c" style="left:293px;width:37px">0.0</div>
<div class="c" style="left:331px;width:36px">0.4</div>
<div class="c" style="left:368px;width:37px">0.0</div>
<div class="c" style="left:406px;width:36px"></div>
<div class="c" style="left:443px;width:37px"></div>
<div class="c" style="left:481px;width:64px">0.0</div>
<div class="c" style="left:546px;width:73px">0.0</div>
<div class="c" style="left:620px;width:57px">0.1</div>
<div class="c" style="left:678px;width:94px">0.5</div>
<b class="vl" style="left:196px"></b>
<b class="vl" style="left:254px"></b>
<b class="vl" style="left:292px"></b>
<b class="vl" style="left:330px"></b>
<b class="vl" style="left:367px"></b>
<b class="vl" style="left:405px"></b>
<b class="vl" style="left:442px"></b>
<b class="vl" style="left:480px"></b>
<b class="vl" style="left:545px"></b>
<b class="vl" style="left:619px"></b>
<b class="vl" style="left:677px"></b>
</div>
 <div id="sb"><div id="thumb"></div>
  <svg style="position:absolute;left:5px;top:36px" width="12" height="9" viewBox="0 0 12 9"><path d="M1.2 7.3L6 2.3l4.8 5" fill="none" stroke="#9d9d9d" stroke-width="1.5"/></svg>
  <svg style="position:absolute;left:5px;top:706px" width="12" height="9" viewBox="0 0 12 9"><path d="M1.2 1.7L6 6.7l4.8-5" fill="none" stroke="#9d9d9d" stroke-width="1.5"/></svg>
 </div>
</div></div>
</body></html>
